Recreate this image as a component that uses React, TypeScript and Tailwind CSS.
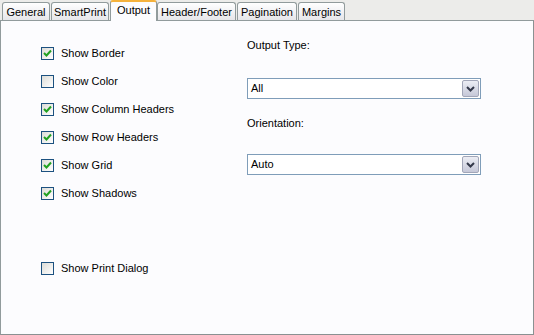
import type { ReactNode } from "react";

const tabs = [
	{ label: "General", w: "w-[48px]", ml: "ml-[2px]" },
	{ label: "SmartPrint", w: "w-[58px]", ml: "ml-[1px]" },
	{ label: "Output", w: "w-[47px]", ml: "ml-[1px]", active: true },
	{ label: "Header/Footer", w: "w-[79px]", ml: "ml-0" },
	{ label: "Pagination", w: "w-[60px]", ml: "ml-[1px]" },
	{ label: "Margins", w: "w-[47px]", ml: "ml-[1px]" },
];

const options = [
	{ label: "Show Border", checked: true },
	{ label: "Show Color", checked: false },
	{ label: "Show Column Headers", checked: true },
	{ label: "Show Row Headers", checked: true },
	{ label: "Show Grid", checked: true },
	{ label: "Show Shadows", checked: true },
];

function CheckBox({ checked, children }: { checked: boolean; children: ReactNode }) {
	return (
		<label className="flex h-[28px] items-center gap-[7px]">
			<span className="flex size-[13px] items-center justify-center border border-[#1c5180] bg-gradient-to-br from-[#dcdcd7] to-white">
				{checked && (
					<svg width="9" height="9" viewBox="0 0 9 9">
						<path d="M1 4 L3.5 6.5 L8 1.5" fill="none" stroke="#21a121" strokeWidth="2" />
					</svg>
				)}
			</span>
			<span>{children}</span>
		</label>
	);
}

function Select({ value }: { value: string }) {
	return (
		<div className="flex h-[21px] w-[234px] items-stretch border border-[#7f9db9] bg-white p-px">
			<span className="flex flex-1 items-center pl-[2px]">{value}</span>
			<span className="flex w-[17px] items-center justify-center rounded-[2px] border border-[#a2a6b8] bg-gradient-to-b from-[#ecedf4] to-[#c6c8d8]">
				<svg width="9" height="6" viewBox="0 0 9 6">
					<path d="M1 1 L4.5 4.5 L8 1" fill="none" stroke="#34394a" strokeWidth="2" />
				</svg>
			</span>
		</div>
	);
}

export default function App() {
	return (
		<div className="flex h-[335px] w-[534px] flex-col bg-[#ececea] font-['Liberation_Sans',sans-serif] text-[11px] text-black">
			<div className="flex h-[20px] items-end">
				{tabs.map((t) =>
					t.active ? (
						<div
							key={t.label}
							className={`relative z-10 -mb-px flex h-[21px] ${t.w} ${t.ml} items-center justify-center rounded-t-[3px] border-x border-t-2 border-x-[#919b9c] border-t-[#f5b23c] bg-[#fcfcfe] pb-[2px]`}
						>
							{t.label}
						</div>
					) : (
						<div
							key={t.label}
							className={`flex h-[18px] ${t.w} ${t.ml} items-center justify-center rounded-t-[3px] border-x border-t border-[#919b9c] bg-gradient-to-b from-white to-[#e6e6ea] pt-px`}
						>
							{t.label}
						</div>
					),
				)}
			</div>
			<div className="flex flex-1 border border-[#919b9c] border-r-[#8a9192] border-b-[#8a9192] bg-[#fcfcfe] shadow-[1px_1px_0_#c6c9ca]">
				<div className="flex w-[246px] flex-col pl-[40px] pt-[18px]">
					{options.map((o) => (
						<CheckBox key={o.label} checked={o.checked}>
							{o.label}
						</CheckBox>
					))}
					<div className="mt-[47px]">
						<CheckBox checked={false}>Show Print Dialog</CheckBox>
					</div>
				</div>
				<div className="flex flex-col pt-[18px]">
					<div className="h-[13px] leading-[13px]">Output Type:</div>
					<div className="mt-[26px]">
						<Select value="All" />
					</div>
					<div className="mt-[18px] h-[13px] leading-[13px]">Orientation:</div>
					<div className="mt-[24px]">
						<Select value="Auto" />
					</div>
				</div>
			</div>
		</div>
	);
}
